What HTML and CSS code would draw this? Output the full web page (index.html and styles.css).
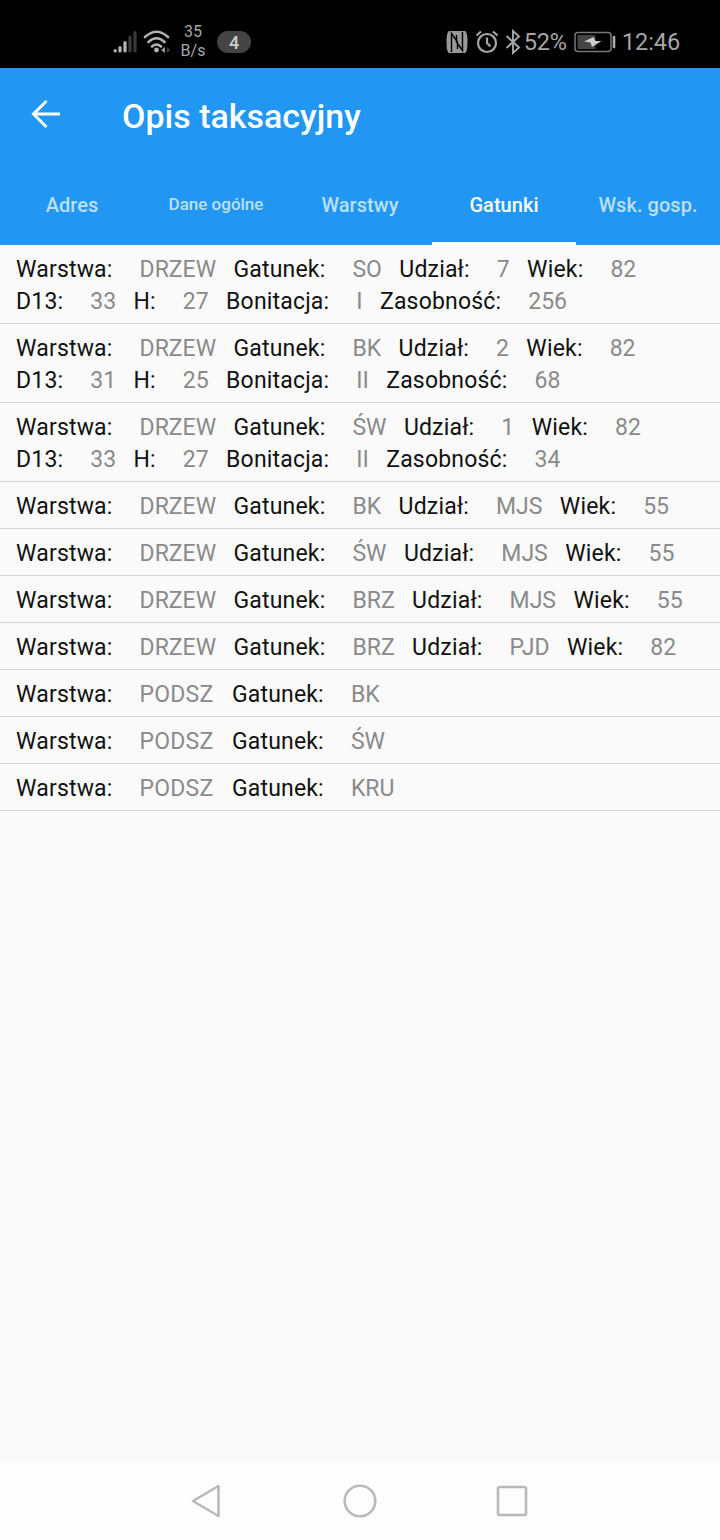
FILE: index.html
```html
<!DOCTYPE html>
<html lang="pl">
<head>
  <meta charset="UTF-8">
  <meta name="viewport" content="width=device-width, initial-scale=1.0">
  <title>Opis taksacyjny</title>
  <link rel="stylesheet" href="styles.css">
</head>
<body>
  <div class="status-bar">
    <div class="status-left">
      <svg class="signal" width="24" height="24" viewBox="0 0 24 24">
        <g stroke-width="3.200" stroke-linecap="round">
          <path d="M2.200 20.500v.5M7 17.500v3.500M12 12.500v8.500" stroke="#b4b4b4"/>
          <path d="M17 7v14M22 2.500v18.500" stroke="#3a3a3a"/>
        </g>
      </svg>
      <svg class="wifi" width="28" height="24" viewBox="0 0 28 24">
        <g fill="none" stroke="#b0b0b0" stroke-width="2.600" stroke-linecap="round">
          <path d="M2 7Q13.500-3.500 25 7M5.500 12Q13.500 4.500 21.500 12M9 16.500Q13.500 12.500 18 16.500"/>
        </g>
        <circle cx="13.500" cy="20" r="2.400" fill="#b0b0b0"/>
        <path d="M18 20l4-3v6z" fill="#999"/>
        <path d="M27 20l-3-3v6z" fill="#444"/>
      </svg>
      <div class="speed">35<br>B/s</div>
      <div class="notif-count">4</div>
    </div>
    <div class="status-right">
      <svg class="nfc" width="24" height="24" viewBox="0 0 24 24">
        <path d="M4 1h16q2.500 1 2.500 11T20 23H4Q1.500 22 1.500 12T4 1z" fill="#999"/>
        <path d="M6.500 22V3.500l6 8.500v7M17.500 2v18.500l-6-8.500V5" fill="none" stroke="#000" stroke-width="1.400"/>
      </svg>
      <svg class="alarm" width="24" height="24" viewBox="0 0 24 24">
        <g fill="none" stroke="#a6a6a6" stroke-width="2.200">
          <circle cx="12" cy="13" r="9"/>
          <path d="M12 7.500V13l3.500 3.500M1.500 5.500l4.500-4M22.500 5.500l-4.500-4"/>
        </g>
      </svg>
      <svg class="bluetooth" width="16" height="26" viewBox="0 0 16 26">
        <path d="M1.500 7l12.500 11.500-6 5.500V2l6 5.500L1.500 19" fill="none" stroke="#a6a6a6" stroke-width="1.900"/>
      </svg>
      <span class="percent">52%</span>
      <svg class="battery" width="42" height="22" viewBox="0 0 42 22">
        <rect x="1" y="1.500" width="36" height="19" rx="3" fill="none" stroke="#777" stroke-width="1.500"/>
        <path d="M3.500 4h18v14h-18z" fill="#444"/>
        <path d="M10 10.500l9.500-4.500 2 4h6l-9.500 6-1.500-4.500z" fill="#ccc"/>
        <path d="M40 6v10" stroke="#aaa" stroke-width="2.600" stroke-linecap="round"/>
      </svg>
      <span class="clock">12:46</span>
    </div>
  </div>

  <header class="app-bar">
    <div class="toolbar">
      <svg class="back" width="30" height="30" viewBox="0 0 30 30">
        <path d="M29 15H3M15.500 2L2.500 15l13 13" fill="none" stroke="#fff" stroke-width="3"/>
      </svg>
      <h1>Opis taksacyjny</h1>
    </div>
    <nav class="tabs">
      <div class="tab">Adres</div>
      <div class="tab small">Dane ogólne</div>
      <div class="tab">Warstwy</div>
      <div class="tab active">Gatunki</div>
      <div class="tab">Wsk. gosp.</div>
    </nav>
  </header>

  <main class="list">
    <div class="item">
      <div class="line"><b>Warstwa:</b><i>DRZEW</i><b>Gatunek:</b><i>SO</i><b>Udział:</b><i>7</i><b>Wiek:</b><i>82</i></div>
      <div class="line"><b>D13:</b><i>33</i><b>H:</b><i>27</i><b>Bonitacja:</b><i>I</i><b>Zasobność:</b><i>256</i></div>
    </div>
    <div class="item">
      <div class="line"><b>Warstwa:</b><i>DRZEW</i><b>Gatunek:</b><i>BK</i><b>Udział:</b><i>2</i><b>Wiek:</b><i>82</i></div>
      <div class="line"><b>D13:</b><i>31</i><b>H:</b><i>25</i><b>Bonitacja:</b><i>II</i><b>Zasobność:</b><i>68</i></div>
    </div>
    <div class="item">
      <div class="line"><b>Warstwa:</b><i>DRZEW</i><b>Gatunek:</b><i>ŚW</i><b>Udział:</b><i>1</i><b>Wiek:</b><i>82</i></div>
      <div class="line"><b>D13:</b><i>33</i><b>H:</b><i>27</i><b>Bonitacja:</b><i>II</i><b>Zasobność:</b><i>34</i></div>
    </div>
    <div class="item">
      <div class="line"><b>Warstwa:</b><i>DRZEW</i><b>Gatunek:</b><i>BK</i><b>Udział:</b><i>MJS</i><b>Wiek:</b><i>55</i></div>
    </div>
    <div class="item">
      <div class="line"><b>Warstwa:</b><i>DRZEW</i><b>Gatunek:</b><i>ŚW</i><b>Udział:</b><i>MJS</i><b>Wiek:</b><i>55</i></div>
    </div>
    <div class="item">
      <div class="line"><b>Warstwa:</b><i>DRZEW</i><b>Gatunek:</b><i>BRZ</i><b>Udział:</b><i>MJS</i><b>Wiek:</b><i>55</i></div>
    </div>
    <div class="item">
      <div class="line"><b>Warstwa:</b><i>DRZEW</i><b>Gatunek:</b><i>BRZ</i><b>Udział:</b><i>PJD</i><b>Wiek:</b><i>82</i></div>
    </div>
    <div class="item">
      <div class="line"><b>Warstwa:</b><i class="wide">PODSZ</i><b>Gatunek:</b><i>BK</i></div>
    </div>
    <div class="item">
      <div class="line"><b>Warstwa:</b><i class="wide">PODSZ</i><b>Gatunek:</b><i>ŚW</i></div>
    </div>
    <div class="item">
      <div class="line"><b>Warstwa:</b><i class="wide">PODSZ</i><b>Gatunek:</b><i>KRU</i></div>
    </div>
  </main>

  <footer class="nav-bar">
    <svg width="36" height="36" viewBox="0 0 36 36"><path d="M28.500 3v30L3 18z"/></svg>
    <svg width="36" height="36" viewBox="0 0 36 36"><circle cx="18" cy="18" r="15.300"/></svg>
    <svg width="36" height="36" viewBox="0 0 36 36"><rect x="4" y="4" width="28" height="28" rx="1.500"/></svg>
  </footer>
</body>
</html>
```
FILE: styles.css
```css
body {
  margin: 0;
  height: 1540px;
  display: flex;
  flex-direction: column;
  background-color: #fafafa;
  font-family: Roboto, sans-serif;
  overflow: hidden;
}

.status-bar {
  display: flex;
  justify-content: space-between;
  height: 68px;
  box-sizing: border-box;
  padding: 15px 40px 0 113px;
  background-color: #000;
  color: #a6a6a6;
}

.status-left,
.status-right {
  display: flex;
  align-items: center;
  height: 53px;
}

.wifi {
  margin-left: 6px;
}

.speed {
  width: 32px;
  margin-left: 6px;
  padding-bottom: 1px;
  font-size: 16px;
  line-height: 19px;
  text-align: center;
}

.notif-count {
  width: 34px;
  height: 22px;
  margin-left: 8px;
  border-radius: 11px;
  background-color: #444;
  color: #ccc;
  font-size: 18px;
  font-weight: 500;
  line-height: 23px;
  text-align: center;
}

.alarm {
  margin-left: 6px;
}

.bluetooth {
  margin: 0 3px 0 6px;
}

.percent,
.clock {
  font-size: 23.5px;
  letter-spacing: -0.1px;
}

.battery {
  margin: 0 6px 0 7px;
}

.app-bar {
  height: 177px;
  background-color: #2196f3;
  color: #fff;
}

.toolbar {
  display: flex;
  align-items: center;
  height: 97px;
  padding-left: 31px;
}

.back {
  margin-top: -5px;
}

h1 {
  margin: -2px 0 0 61px;
  font-size: 34px;
  font-weight: 500;
}

.tabs {
  display: flex;
  height: 80px;
}

.tab {
  flex: 1;
  box-sizing: border-box;
  border-bottom: 3px solid transparent;
  color: #bce0fb;
  font-size: 20px;
  font-weight: 500;
  letter-spacing: 0.05px;
  line-height: 80px;
  text-align: center;
  white-space: nowrap;
}

.tab.small {
  font-size: 17px;
  letter-spacing: 0;
  line-height: 78px;
}

.tab.active {
  border-bottom-color: #fff;
  color: #fff;
}

.list {
  flex: 1;
}

.item {
  padding: 9px 16px 5px;
  border-bottom: 1px solid #d3d3d3;
}

.line {
  display: flex;
  height: 32px;
  font-size: 23px;
  line-height: 32px;
  white-space: nowrap;
}

.line b {
  margin-right: 27px;
  color: #111;
  font-weight: 400;
  letter-spacing: 0.18px;
}

.line i {
  margin-right: 17.4px;
  color: #8a8a8a;
  font-style: normal;
}

.line i.wide {
  margin-right: 18.5px;
  letter-spacing: 0.2px;
}

.nav-bar {
  display: flex;
  align-items: center;
  justify-content: center;
  gap: 116px;
  height: 78px;
  background-color: #fdfdfd;
}

.nav-bar svg {
  fill: none;
  stroke: #bababa;
  stroke-width: 2.6;
  stroke-linejoin: round;
}
```
